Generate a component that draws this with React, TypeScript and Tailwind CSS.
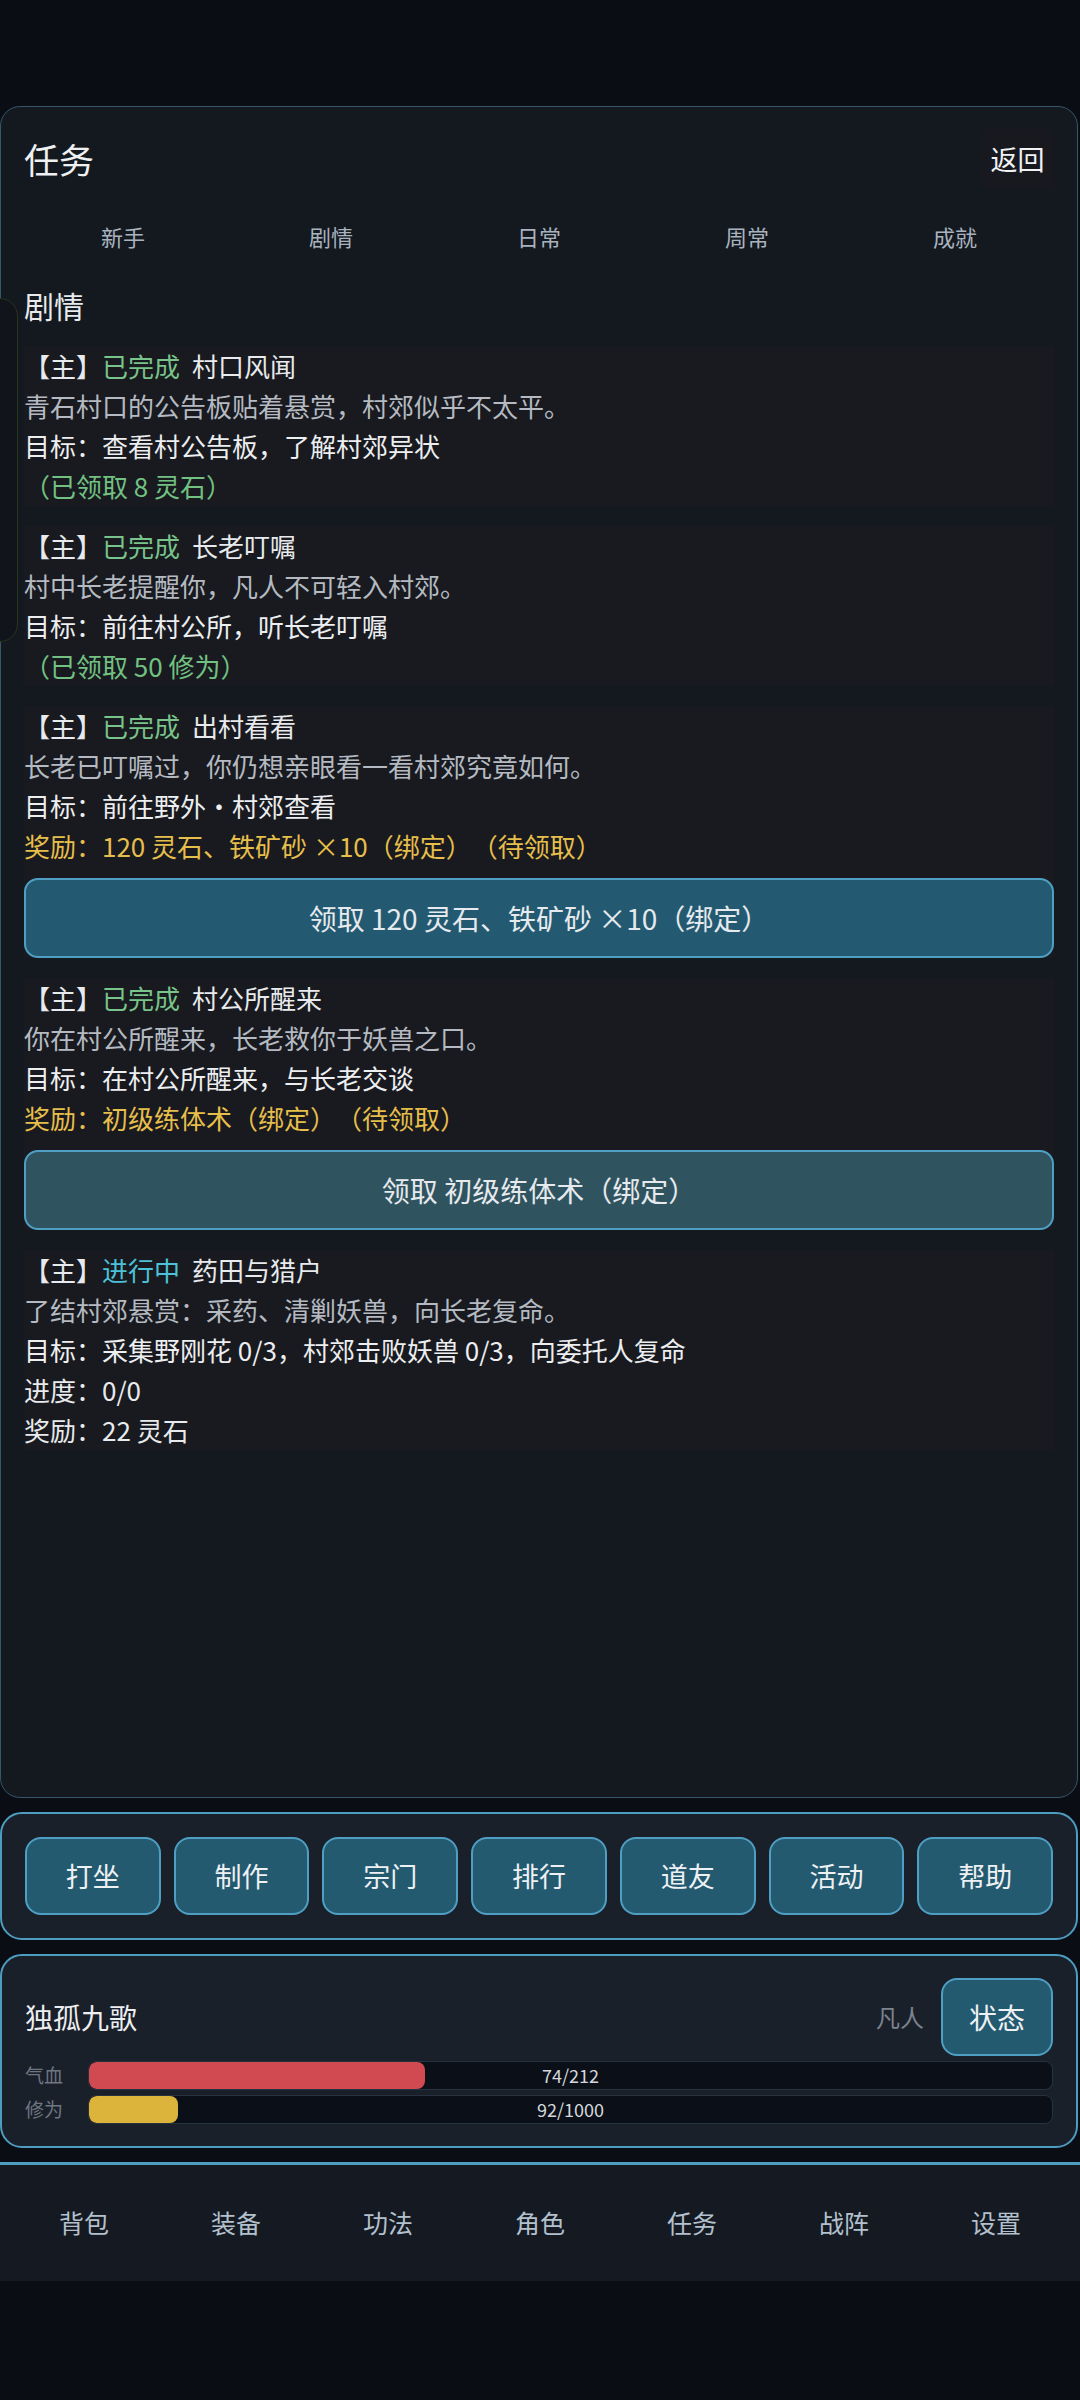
import React from "react";

type Quest = {
  status: "done" | "doing";
  name: string;
  desc: string;
  target: string;
  extra?: { text: string; tone: "green" | "yellow" | "white" }[];
  claim?: { label: string; muted?: boolean };
};

const quests: Quest[] = [
  {
    status: "done",
    name: "村口风闻",
    desc: "青石村口的公告板贴着悬赏，村郊似乎不太平。",
    target: "目标：查看村公告板，了解村郊异状",
    extra: [{ text: "（已领取 8 灵石）", tone: "green" }],
  },
  {
    status: "done",
    name: "长老叮嘱",
    desc: "村中长老提醒你，凡人不可轻入村郊。",
    target: "目标：前往村公所，听长老叮嘱",
    extra: [{ text: "（已领取 50 修为）", tone: "green" }],
  },
  {
    status: "done",
    name: "出村看看",
    desc: "长老已叮嘱过，你仍想亲眼看一看村郊究竟如何。",
    target: "目标：前往野外・村郊查看",
    extra: [{ text: "奖励：120 灵石、铁矿砂 ×10（绑定）（待领取）", tone: "yellow" }],
    claim: { label: "领取 120 灵石、铁矿砂 ×10（绑定）" },
  },
  {
    status: "done",
    name: "村公所醒来",
    desc: "你在村公所醒来，长老救你于妖兽之口。",
    target: "目标：在村公所醒来，与长老交谈",
    extra: [{ text: "奖励：初级练体术（绑定）（待领取）", tone: "yellow" }],
    claim: { label: "领取 初级练体术（绑定）", muted: true },
  },
  {
    status: "doing",
    name: "药田与猎户",
    desc: "了结村郊悬赏：采药、清剿妖兽，向长老复命。",
    target: "目标：采集野刚花 0/3，村郊击败妖兽 0/3，向委托人复命",
    extra: [
      { text: "进度：0/0", tone: "white" },
      { text: "奖励：22 灵石", tone: "white" },
    ],
  },
];

const tabs = ["新手", "剧情", "日常", "周常", "成就"];
const actions = ["打坐", "制作", "宗门", "排行", "道友", "活动", "帮助"];
const navItems = ["背包", "装备", "功法", "角色", "任务", "战阵", "设置"];

const toneClass = {
  green: "text-[#72c182]",
  yellow: "text-[#e6be4b]",
  white: "text-[#e8eaed]",
};

function QuestCard({ q }: { q: Quest }) {
  return (
    <div className="bg-[#181a1f] text-[26px] leading-[40px]">
      <div className="text-[#e8eaed]">
        【主】
        {q.status === "done" ? (
          <span className="text-[#79c48a]">已完成</span>
        ) : (
          <span className="text-[#4cc1d8]">进行中</span>
        )}
        <span className="ml-[12px]">{q.name}</span>
      </div>
      <div className="text-[#b5bac2]">{q.desc}</div>
      <div className="text-[#eceef0]">{q.target}</div>
      {q.extra?.map((e) => (
        <div key={e.text} className={toneClass[e.tone]}>
          {e.text}
        </div>
      ))}
      {q.claim && (
        <button
          className={
            "mt-[12px] flex h-[80px] w-full items-center justify-center rounded-[14px] border-2 border-[#4e9fc3] text-[28px] text-[#e6eaee] " +
            (q.claim.muted ? "bg-[#30545f]" : "bg-[#245a71]")
          }
        >
          {q.claim.label}
        </button>
      )}
    </div>
  );
}

function StatBar({ label, value, max, color }: { label: string; value: number; max: number; color: string }) {
  return (
    <div className="flex items-center">
      <span className="w-[63px] text-[19px] text-[#6e7682]">{label}</span>
      <div className="relative h-[29px] flex-1 overflow-hidden rounded-[8px] border border-[#27323f] bg-[#0b0f17]">
        <div className={"h-full rounded-[8px] " + color} style={{ width: `${(value / max) * 100}%` }} />
        <span className="absolute inset-0 flex items-center justify-center text-[18px] text-[#d4d8de]">
          {value}/{max}
        </span>
      </div>
    </div>
  );
}

export default function App() {
  return (
    <div className="relative min-h-[2400px] overflow-hidden bg-[#0a0d14] pt-[106px] font-['Noto_Sans_CJK_SC','Noto_Sans',sans-serif] [text-spacing-trim:space-all]">
      <div className="flex flex-col gap-[14px]">
        {/* quest panel */}
        <section className="mr-[2px] h-[1692px] rounded-[20px] border border-[#35566d] bg-[#141920] px-[23px] pt-[22px]">
          <div className="flex h-[60px] items-center justify-between">
            <h1 className="text-[35px] text-[#eef0f2]">任务</h1>
            <button className="h-[60px] w-[73px] rounded-[6px] bg-[#17191e] text-[27px] text-[#f0f2f4]">返回</button>
          </div>
          <div className="-mx-[5px] mt-[14px] grid h-[66px] grid-cols-5 items-center">
            {tabs.map((t) => (
              <div key={t} className="text-center text-[22px] text-[#a9b3bf]">
                {t}
              </div>
            ))}
          </div>
          <h2 className="mt-[16px] text-[30px] leading-[40px] text-[#e8eaec]">剧情</h2>
          <div className="mt-[21px] flex flex-col gap-[20px]">
            {quests.map((q) => (
              <QuestCard key={q.name} q={q} />
            ))}
          </div>
        </section>

        {/* quick actions */}
        <section className="mr-[2px] rounded-[22px] border-2 border-[#4d9dc0] bg-[#1a202a] px-[23px] py-[23px]">
          <div className="flex gap-[13px]">
            {actions.map((a) => (
              <button
                key={a}
                className="flex h-[78px] flex-1 items-center justify-center rounded-[16px] border-2 border-[#4e9fc3] bg-[#245a70] text-[27px] text-[#eef1f4]"
              >
                {a}
              </button>
            ))}
          </div>
        </section>

        {/* player status */}
        <section className="mr-[2px] rounded-[22px] border-2 border-[#4d9dc0] bg-[#1a202a] px-[23px] pb-[22px] pt-[22px]">
          <div className="flex items-center">
            <span className="flex-1 text-[28px] text-[#eceef0]">独孤九歌</span>
            <span className="mr-[17px] text-[24px] text-[#7b838e]">凡人</span>
            <button className="flex h-[78px] w-[112px] items-center justify-center rounded-[16px] border-2 border-[#4e9fc3] bg-[#245a70] text-[28px] text-[#eef1f4]">
              状态
            </button>
          </div>
          <div className="mt-[5px] flex flex-col gap-[5px]">
            <StatBar label="气血" value={74} max={212} color="bg-[#d14a51]" />
            <StatBar label="修为" value={92} max={1000} color="bg-[#dcb33b]" />
          </div>
        </section>

        {/* bottom nav */}
        <nav className="grid h-[119px] grid-cols-7 items-center border-t-[3px] border-[#4d9dc0] bg-[#151a22] px-[8px]">
          {navItems.map((n) => (
            <div key={n} className="text-center text-[25px] text-[#b3c0cd]">
              {n}
            </div>
          ))}
        </nav>
      </div>

      {/* side drawer peeking in from the left */}
      <div className="absolute left-[-200px] top-[298px] h-[344px] w-[218px] rounded-[18px] border border-[#27351f] bg-[#11151b]" />
    </div>
  );
}
